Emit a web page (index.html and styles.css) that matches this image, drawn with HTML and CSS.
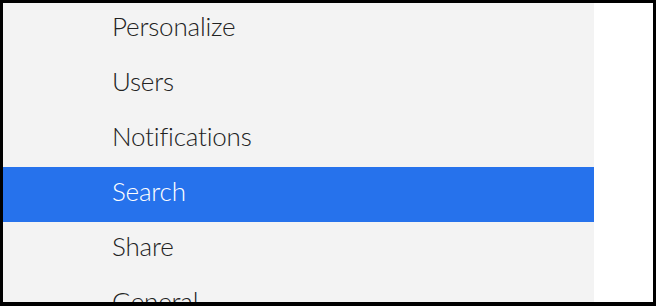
FILE: index.html
```html
<!DOCTYPE html>
<html lang="en">
<head>
    <meta charset="UTF-8">
    <title>Settings</title>
    <link rel="stylesheet" href="styles.css">
</head>
<body>
<div class="frame">
    <div class="menu">
        <div class="menu-item">Personalize</div>
        <div class="menu-item">Users</div>
        <div class="menu-item">Notifications</div>
        <div class="menu-item selected">Search</div>
        <div class="menu-item">Share</div>
        <div class="menu-item">General</div>
    </div>
    <div class="content"></div>
</div>
</body>
</html>
```

FILE: styles.css
```css
html, body {
    margin: 0;
    height: 100%;
}

body {
    font-family: Lato, "Open Sans", sans-serif;
    background-color: black;
}

.frame {
    box-sizing: border-box;
    height: 306px;
    border: solid black;
    border-width: 3px 3px 4px 3px;
    display: flex;
    overflow: hidden;
    background-color: white;
}

.menu {
    width: 591px;
    background-color: #f3f3f3;
    margin-top: -1px;
}

.menu-item {
    height: 55px;
    line-height: 49px;
    padding-left: 109px;
    font-size: 26px;
    font-weight: 300;
    letter-spacing: -0.2px;
    color: #222;
}

.menu-item.selected {
    background-color: #2672ec;
    color: white;
}

.content {
    flex: 1;
}
```
